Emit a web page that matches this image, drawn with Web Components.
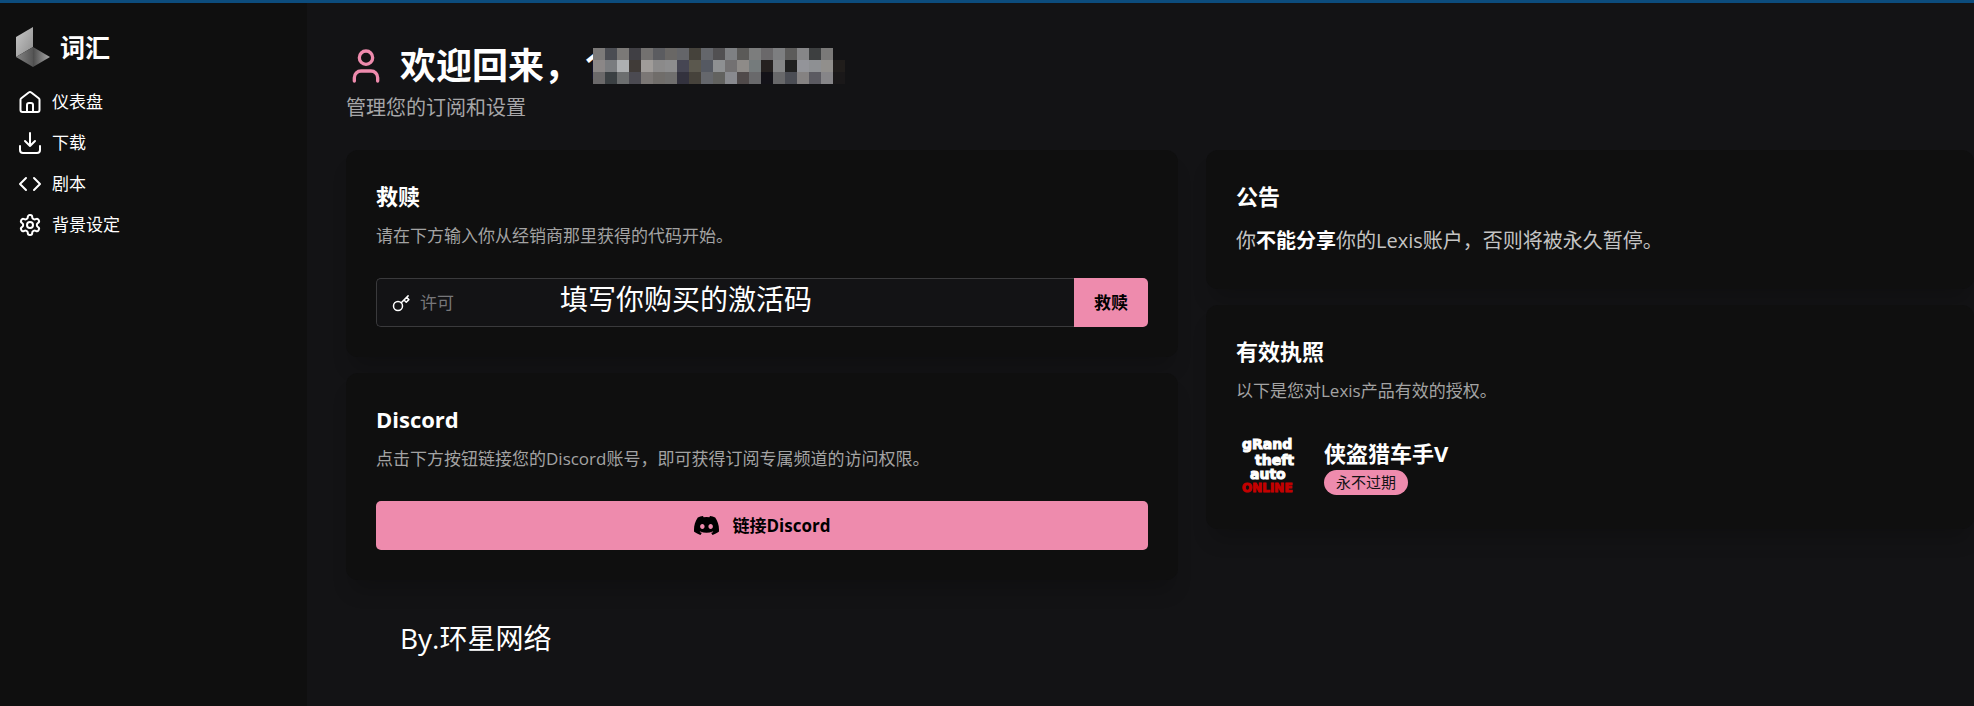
<!DOCTYPE html>
<html lang="zh-CN">
<head>
<meta charset="utf-8">
<title>Lexis</title>
<style>
  html, body {
    margin: 0;
    min-height: 100%;
    background: #131315;
  }
</style>
</head>
<body>
<lexis-app>
  <lexis-sidebar slot="sidebar">
    <nav-item icon="home">仪表盘</nav-item>
    <nav-item icon="download">下载</nav-item>
    <nav-item icon="code">剧本</nav-item>
    <nav-item icon="settings">背景设定</nav-item>
  </lexis-sidebar>
  <page-heading slot="heading">
    欢迎回来，
    <span slot="sub">管理您的订阅和设置</span>
  </page-heading>
  <panel-card slot="left">
    <span slot="title">救赎</span>
    <span slot="sub">请在下方输入你从经销商那里获得的代码开始。</span>
    <redeem-form></redeem-form>
  </panel-card>
  <panel-card slot="left">
    <span slot="title">Discord</span>
    <span slot="sub">点击下方按钮链接您的Discord账号，即可获得订阅专属频道的访问权限。</span>
    <discord-button>链接Discord</discord-button>
  </panel-card>
  <panel-card slot="right">
    <span slot="title">公告</span>
    <notice-text>你<strong>不能分享</strong>你的Lexis账户，否则将被永久暂停。</notice-text>
  </panel-card>
  <panel-card slot="right">
    <span slot="title">有效执照</span>
    <span slot="sub">以下是您对Lexis产品有效的授权。</span>
    <license-item>
      侠盗猎车手V
      <span slot="expiry">永不过期</span>
    </license-item>
  </panel-card>
  <span slot="credit">By.环星网络</span>
</lexis-app>

<script>
const ICONS = {
  home: '<path d="M2.5 9.8a2 2 0 0 1 .8-1.6l7.4-5.7a2 2 0 0 1 2.6 0l7.4 5.7a2 2 0 0 1 .8 1.6V20a2 2 0 0 1-2 2h-15a2 2 0 0 1-2-2z"/><path d="M9 22v-7a2 2 0 0 1 2-2h2a2 2 0 0 1 2 2v7"/>',
  download: '<path d="M22 15v4a3 3 0 0 1-3 3H5a3 3 0 0 1-3-3v-4M7 10l5 5 5-5M12 15V2"/>',
  code: '<path d="m16 18 6-6-6-6M8 6l-6 6 6 6"/>',
  settings: '<path d="M12.22 2h-.44a2 2 0 0 0-2 2v.18a2 2 0 0 1-1 1.73l-.43.25a2 2 0 0 1-2 0l-.15-.08a2 2 0 0 0-2.73.73l-.22.38a2 2 0 0 0 .73 2.73l.15.1a2 2 0 0 1 1 1.72v.51a2 2 0 0 1-1 1.74l-.15.09a2 2 0 0 0-.73 2.73l.22.38a2 2 0 0 0 2.73.73l.15-.08a2 2 0 0 1 2 0l.43.25a2 2 0 0 1 1 1.73V20a2 2 0 0 0 2 2h.44a2 2 0 0 0 2-2v-.18a2 2 0 0 1 1-1.73l.43-.25a2 2 0 0 1 2 0l.15.08a2 2 0 0 0 2.73-.73l.22-.39a2 2 0 0 0-.73-2.73l-.15-.08a2 2 0 0 1-1-1.74v-.5a2 2 0 0 1 1-1.74l.15-.09a2 2 0 0 0 .73-2.73l-.22-.38a2 2 0 0 0-2.73-.73l-.15.08a2 2 0 0 1-2 0l-.43-.25a2 2 0 0 1-1-1.73V4a2 2 0 0 0-2-2z"/><circle cx="12" cy="12" r="3"/>',
  user: '<path d="M19 21v-2a4 4 0 0 0-4-4H9a4 4 0 0 0-4 4v2"/><circle cx="12" cy="7" r="4"/>',
  // Ring with a short blade that ends in a small square bit
  key: '<circle cx="8" cy="16" r="6"/><path d="M12.3 11.7 21.5 2.5M16 8l3 3 3.5-3.5-3-3"/>'
};

// Colours of the blocks that cover the account name, one row per string
const MASK = [
  '7c7a79 4b4d53 7b7977 403f44 737170 5b5c60 696765 646569 45423b 64666b 515052 7e8083 5b5a58 7c7d7d 6a686a 7d7e80 5c5b5a 868688 3d3f40 7a7978',
  '8b8787 7a7c7f adafb1 403b38 a09c99 8b8a8a 8d8d8e 464653 5b584e 555962 8e9092 737172 8e8b88 757b7c 252120 858687 202020 939499 8e9093 918f8c 201d1b',
  '6b696a 3b4043 6c6e6f 4b4a51 7b7775 706d6a 706f6e 33323e 46423b 65676c 62625f 898a8f 504a4a 69696b 131218 68686a 4b4d54 858282 5b5a61 868588 1a1819'
].map(row => row.split(' '));

function define(name, html, setup) {
  const template = document.createElement('template');
  template.innerHTML = html;
  customElements.define(name, class extends HTMLElement {
    constructor() {
      super();
      this.attachShadow({ mode: 'open' });
      this.shadowRoot.appendChild(template.content.cloneNode(true));
    }

    connectedCallback() {
      setup?.(this, this.shadowRoot);
    }
  });
}

define('line-icon', `
  <style>
    :host {
      display: block;
      flex: none;
      width: 24px;
      height: 24px;
    }

    svg {
      display: block;
      width: 100%;
      height: 100%;
      fill: none;
      stroke: currentColor;
      stroke-width: 2;
      stroke-linecap: round;
      stroke-linejoin: round;
    }
  </style>
  <svg viewBox="0 0 24 24" aria-hidden="true"></svg>
`, (host, root) => {
  root.querySelector('svg').innerHTML = ICONS[host.getAttribute('name')] ?? '';
});

define('lexis-app', `
  <style>
    :host {
      box-sizing: border-box;
      display: flex;
      min-height: 100vh;
      border-top: 3px solid #0c4c7d;
      overflow: hidden;
      background: #131315;
      color: #fff;
      font-family: "Open Sans", "Noto Sans CJK SC", sans-serif;
      font-size: 18px;
      line-height: 28px;
    }

    main {
      flex: 1;
      min-width: 0;
      padding: 36px 0 40px 39px;
    }

    .columns {
      display: grid;
      grid-template-columns: minmax(0, 52fr) minmax(0, 48fr);
      gap: 28px;
      margin-top: 26px;
    }

    .column {
      display: flex;
      flex-direction: column;
      gap: 16px;
    }

    footer {
      margin-top: 40px;
      padding-left: 54px;
      font-size: 28px;
      line-height: 36px;
    }
  </style>
  <slot name="sidebar"></slot>
  <main>
    <slot name="heading"></slot>
    <div class="columns">
      <div class="column"><slot name="left"></slot></div>
      <div class="column"><slot name="right"></slot></div>
    </div>
    <footer><slot name="credit"></slot></footer>
  </main>
`);

define('lexis-sidebar', `
  <style>
    :host {
      box-sizing: border-box;
      flex: none;
      display: block;
      width: 307px;
      padding: 22px 16px;
      background: #0f0f0f;
    }

    .brand {
      display: flex;
      align-items: center;
      gap: 10px;
      margin-bottom: 13px;
      font-size: 25px;
      font-weight: 700;
      line-height: 44px;
    }

    .brand svg {
      width: 34px;
      height: 40px;
    }

    nav {
      display: flex;
      flex-direction: column;
      gap: 1px;
    }
  </style>
  <div class="brand">
    <svg viewBox="0 0 34 40" aria-hidden="true">
      <defs>
        <linearGradient id="wall" x1="0" y1="0" x2="1" y2="1">
          <stop offset="0" stop-color="#c8c8c8"/><stop offset="1" stop-color="#8c8c8c"/>
        </linearGradient>
        <linearGradient id="left" x1="0" y1="0" x2="1" y2="0">
          <stop offset="0" stop-color="#858585"/><stop offset="1" stop-color="#555"/>
        </linearGradient>
        <linearGradient id="right" x1="0" y1="0" x2="1" y2="0">
          <stop offset="0" stop-color="#4c4c4c"/><stop offset="1" stop-color="#a8a8a8"/>
        </linearGradient>
      </defs>
      <path fill="url(#wall)" d="M0 10 17 0v20L0 30z"/>
      <path fill="url(#left)" d="M0 30 17 20v20z"/>
      <path fill="url(#right)" d="m17 20 17 10-17 10z"/>
    </svg>
    <span>词汇</span>
  </div>
  <nav><slot></slot></nav>
`);

define('nav-item', `
  <style>
    :host {
      display: block;
    }

    a {
      display: flex;
      align-items: center;
      gap: 10px;
      padding: 6px 2px;
      color: #fff;
      font-size: 17px;
      line-height: 28px;
      text-decoration: none;
    }
  </style>
  <a href="#"><line-icon></line-icon><span><slot></slot></span></a>
`, (host, root) => {
  const icon = document.createElement('line-icon');
  icon.setAttribute('name', host.getAttribute('icon'));
  root.querySelector('line-icon').replaceWith(icon);
});

define('page-heading', `
  <style>
    :host {
      display: block;
    }

    h1 {
      display: flex;
      align-items: center;
      margin: 0;
      font-size: 36px;
      font-weight: 700;
      line-height: 53px;
    }

    line-icon {
      width: 40px;
      height: 40px;
      margin-right: 14px;
      color: #ee8bad;
    }

    .name {
      display: flex;
      align-items: center;
      margin-left: 4px;
    }

    /* The mask lies over the name and leaves only its first stroke */
    svg {
      position: relative;
      display: block;
      width: 252px;
      height: 36px;
      margin-left: -12px;
    }

    p {
      margin: 0;
      color: #a6a6a8;
      font-size: 20px;
      line-height: 32px;
    }
  </style>
  <h1>
    <line-icon name="user"></line-icon>
    <span><slot></slot></span>
    <span class="name"><span>1</span><svg viewBox="0 0 252 36" shape-rendering="crispEdges" aria-hidden="true"></svg></span>
  </h1>
  <p><slot name="sub"></slot></p>
`, (host, root) => {
  root.querySelector('svg').innerHTML = MASK.map((row, y) => row.map((color, x) =>
    `<rect x="${x * 12}" y="${y * 12}" width="12" height="12" fill="#${color}"/>`
  ).join('')).join('');
});

define('panel-card', `
  <style>
    :host {
      display: block;
      padding: 28px 30px;
      border-radius: 12px;
      background: #0f0f0f;
      box-shadow: 0 16px 20px -6px rgba(0, 0, 0, .2);
    }

    h2 {
      margin: 0;
      font-size: 22px;
      font-weight: 700;
      line-height: 36px;
    }

    p {
      margin: 8px 0 28px;
      color: #a3a3a3;
      font-size: 17px;
      line-height: 28px;
    }
  </style>
  <h2><slot name="title"></slot></h2>
  <p><slot name="sub"></slot></p>
  <slot></slot>
`, (host, root) => {
  if (!host.querySelector('[slot=sub]')) root.querySelector('p')?.remove();
});

define('redeem-form', `
  <style>
    :host {
      display: block;
      padding-bottom: 2px;
    }

    form {
      display: flex;
      height: 49px;
    }

    .field {
      position: relative;
      box-sizing: border-box;
      display: flex;
      flex: 1;
      align-items: center;
      gap: 10px;
      min-width: 0;
      padding-left: 15px;
      border: 1px solid #3a3a3c;
      border-right: 0;
      border-radius: 5px 0 0 5px;
      background: #131315;
    }

    line-icon {
      width: 18px;
      height: 18px;
    }

    input {
      flex: 1;
      min-width: 0;
      padding: 0;
      border: 0;
      outline: 0;
      background: none;
      color: #fff;
      font: inherit;
      font-size: 17px;
    }

    input::placeholder {
      color: #77777a;
      opacity: 1;
    }

    /* Caption laid over the text box */
    .hint {
      position: absolute;
      left: 183px;
      top: 0;
      font-size: 28px;
      line-height: 40px;
      pointer-events: none;
    }

    button {
      width: 74px;
      border: 0;
      border-radius: 0 5px 5px 0;
      background: #ee8bad;
      color: #000;
      font: inherit;
      font-size: 17px;
      font-weight: 700;
    }
  </style>
  <form>
    <div class="field">
      <line-icon name="key"></line-icon>
      <input id="license" type="text" placeholder="许可" aria-label="许可">
      <label class="hint" for="license">填写你购买的激活码</label>
    </div>
    <button type="button">救赎</button>
  </form>
`);

define('discord-button', `
  <style>
    :host {
      display: block;
      padding-bottom: 2px;
    }

    button {
      display: flex;
      align-items: center;
      justify-content: center;
      gap: 14px;
      width: 100%;
      height: 49px;
      border: 0;
      border-radius: 5px;
      background: #ee8bad;
      color: #000;
      font: inherit;
      font-size: 17px;
      font-weight: 700;
    }

    svg {
      width: 25px;
      height: 25px;
    }
  </style>
  <button type="button">
    <svg viewBox="0 0 24 24" aria-hidden="true"><path d="M20.317 4.37a19.79 19.79 0 0 0-4.885-1.515.074.074 0 0 0-.079.037c-.21.375-.444.864-.608 1.25a18.27 18.27 0 0 0-5.487 0 12.64 12.64 0 0 0-.617-1.25.077.077 0 0 0-.079-.037A19.736 19.736 0 0 0 3.677 4.37a.07.07 0 0 0-.032.027C.533 9.046-.32 13.58.099 18.057a.082.082 0 0 0 .031.057 19.9 19.9 0 0 0 5.993 3.03.078.078 0 0 0 .084-.028c.462-.63.874-1.295 1.226-1.994a.076.076 0 0 0-.041-.106 13.107 13.107 0 0 1-1.872-.892.077.077 0 0 1-.008-.128c.126-.094.252-.192.372-.292a.074.074 0 0 1 .077-.01c3.928 1.793 8.18 1.793 12.062 0a.074.074 0 0 1 .078.01c.12.098.246.198.373.292a.077.077 0 0 1-.006.127 12.3 12.3 0 0 1-1.873.892.077.077 0 0 0-.041.107c.36.698.772 1.362 1.225 1.993a.076.076 0 0 0 .084.028 19.839 19.839 0 0 0 6.002-3.03.077.077 0 0 0 .032-.054c.5-5.177-.838-9.674-3.549-13.66a.061.061 0 0 0-.031-.03zM8.02 15.33c-1.183 0-2.157-1.085-2.157-2.419 0-1.333.956-2.419 2.157-2.419 1.21 0 2.176 1.096 2.157 2.42 0 1.333-.956 2.418-2.157 2.418zm7.975 0c-1.183 0-2.157-1.085-2.157-2.419 0-1.333.955-2.419 2.157-2.419 1.21 0 2.176 1.096 2.157 2.42 0 1.333-.946 2.418-2.157 2.418z"/></svg>
    <span><slot></slot></span>
  </button>
`);

define('notice-text', `
  <style>
    :host {
      display: block;
      margin-top: 13px;
      padding-bottom: 6px;
      color: #c4c4c4;
      font-size: 20px;
      line-height: 28px;
    }

    ::slotted(strong) {
      color: #fff;
    }
  </style>
  <slot></slot>
`);

define('license-item', `
  <style>
    :host {
      display: flex;
      align-items: center;
      gap: 20px;
      padding-bottom: 4px;
    }

    .art {
      display: block;
      flex: none;
      width: 68px;
      height: 64px;
    }

    .art text {
      font-family: "DejaVu Sans", sans-serif;
      font-size: 14px;
      font-weight: 700;
      stroke: #fff;
      stroke-width: 1;
      fill: #fff;
    }

    .art .online {
      font-size: 12px;
      stroke: #c40000;
      fill: #c40000;
    }

    h3 {
      margin: 0;
      font-size: 22px;
      font-weight: 700;
      line-height: 34px;
    }

    .badge {
      display: block;
      width: max-content;
      padding: 0 12px;
      border-radius: 13px;
      background: #ee8bad;
      color: #131315;
      font-size: 15px;
      line-height: 25px;
    }
  </style>
  <svg class="art" viewBox="0 0 68 64" role="img" aria-label="grand theft auto online">
    <text x="6" y="16">gRand</text>
    <text x="19" y="32">theft</text>
    <text x="14" y="46">auto</text>
    <text class="online" x="6" y="59">ONLINE</text>
  </svg>
  <div>
    <h3><slot></slot></h3>
    <span class="badge"><slot name="expiry"></slot></span>
  </div>
`);
</script>
</body>
</html>
